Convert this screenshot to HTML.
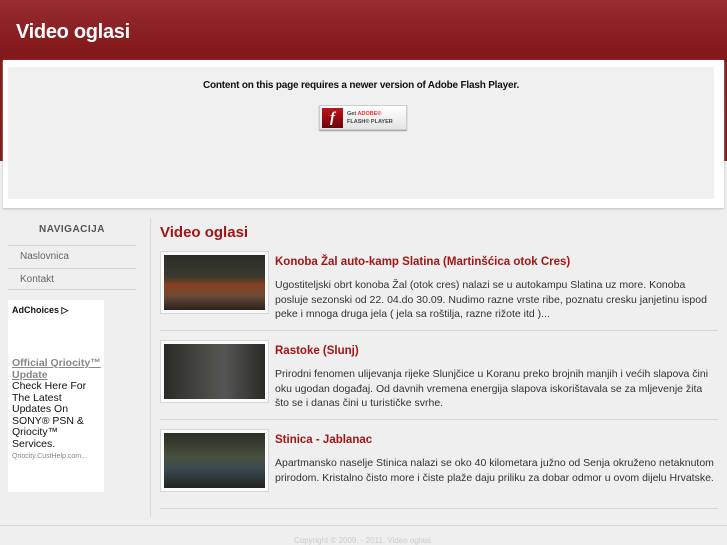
<!DOCTYPE html>
<html><head><style>
*{margin:0;padding:0;box-sizing:border-box}
body{width:727px;height:545px;overflow:hidden;background:#efefef;font-family:"Liberation Sans",sans-serif;position:relative}
.hdr{position:absolute;left:0;top:0;width:727px;height:161px;background:linear-gradient(#972d31,#84191c 30%,#7f1a1c)}
.hdr h1{position:absolute;left:16px;top:21px;color:#fff;font-size:20px;font-weight:bold;letter-spacing:-0.3px}
.box{position:absolute;left:3px;top:60px;width:721px;height:148px;background:#fff;box-shadow:0 1px 2px #bbb}
.inner{position:absolute;left:5px;top:7px;width:706px;height:132px;background:#f0f0f0;text-align:center}
.inner p{font-size:10px;font-weight:bold;margin-top:13px;color:#111;letter-spacing:-0.2px}
.btn{position:absolute;left:311px;top:38px;width:88px;height:25px;background:linear-gradient(#fff,#e4e4e4);border:1px solid #ccc;box-shadow:0 1px 1px #999}
.btn .f{position:absolute;left:2px;top:2px;width:21px;height:20px;background:linear-gradient(#c3141a,#6b0306);color:#fff;font:italic bold 15px "Liberation Serif",serif;line-height:20px;text-align:center}
.btn .t{position:absolute;left:27px;top:4px;font-size:5.5px;text-align:left;color:#444;line-height:8px;font-weight:bold}
.nav{position:absolute;left:8px;top:224px;width:128px}
.nav h3{font-size:10px;color:#555;text-align:center;letter-spacing:.5px;height:21px}
.nav div{border-top:1px solid #d4d4d4;height:22.5px;font-size:10px;color:#666;padding:5px 0 0 12px}
.nav div.l{border-bottom:1px solid #d4d4d4}
.ad{position:absolute;left:8px;top:300px;width:96px;height:192px;background:#fff;font-size:10.5px;color:#111;padding:4px 4px;white-space:nowrap}
.vl{position:absolute;left:150px;top:218px;width:1px;height:299px;background:#d8d8d8}
.ct{position:absolute;left:160px;top:224px;width:558px}
.ct h2{color:#a31515;font-size:15px;height:27px}
.it{position:relative;height:89px;border-bottom:1px solid #d8d8d8}
.th{position:absolute;left:0;top:9px;width:109px;height:63px;border:1px solid #d6d6d6;background:#fafafa;padding:3px}
.th div{width:100%;height:100%}
.it h4{position:absolute;left:115px;top:14px;color:#a31515;font-size:11.5px}
.it p{position:absolute;left:115px;top:36px;font-size:10.5px;color:#333;line-height:14.5px;width:442px}
.ft{position:absolute;left:0;top:525px;width:727px;border-top:1px solid #d8d8d8;font-size:8px;color:#ccc;text-align:center;padding-top:10px}
</style></head><body>
<div class="hdr"><h1>Video oglasi</h1></div>
<div class="box"><div class="inner"><p>Content on this page requires a newer version of Adobe Flash Player.</p>
<div class="btn"><div class="f">f</div><div class="t">Get <span style="color:#e33">ADOBE®</span><br>FLASH® PLAYER</div></div></div></div>
<div class="nav"><h3>NAVIGACIJA</h3><div>Naslovnica</div><div class="l">Kontakt</div></div>
<div class="ad"><b style="font-size:9px">AdChoices ▷</b>
<div style="margin-top:42px;line-height:11.5px"><u style="color:#888;font-weight:bold">Official Qriocity™</u><br><u style="color:#888;font-weight:bold">Update</u><br>Check Here For<br>The Latest<br>Updates On<br>SONY® PSN &amp;<br>Qriocity™<br>Services.<br><span style="font-size:7px;color:#888;line-height:9px">Qriocity.CustHelp.com...</span></div></div>
<div class="vl"></div>
<div class="ct"><h2>Video oglasi</h2>
<div class="it" style="height:80px"><div class="th" style="top:0"><div style="background:linear-gradient(#2a2c28,#3c3a30 40%,#8a4020 55%,#6a4a35 75%,#2a2020)"></div></div>
<h4 style="top:5px">Konoba Žal auto-kamp Slatina (Martinšćica otok Cres)</h4>
<p style="top:27px">Ugostiteljski obrt konoba Žal (otok cres) nalazi se u autokampu Slatina uz more. Konoba posluje sezonski od 22. 04.do 30.09. Nudimo razne vrste ribe, poznatu cresku janjetinu ispod peke i mnoga druga jela ( jela sa roštilja, razne rižote itd )...</p></div>
<div class="it"><div class="th"><div style="background:linear-gradient(90deg,#2a2a28,#4a4a44 40%,#555 60%,#2a2a26)"></div></div>
<h4>Rastoke (Slunj)</h4>
<p>Prirodni fenomen ulijevanja rijeke Slunjčice u Koranu preko brojnih manjih i većih slapova čini oku ugodan događaj. Od davnih vremena energija slapova iskorištavala se za mljevenje žita što se i danas čini u turističke svrhe.</p></div>
<div class="it"><div class="th"><div style="background:linear-gradient(#2a2e26,#4a5040 45%,#3a4a50 65%,#222)"></div></div>
<h4>Stinica - Jablanac</h4>
<p>Apartmansko naselje Stinica nalazi se oko 40 kilometara južno od Senja okruženo netaknutom prirodom. Kristalno čisto more i čiste plaže daju priliku za dobar odmor u ovom dijelu Hrvatske.</p></div>
</div>
<div class="ft">Copyright © 2009. - 2011. Video oglasi.</div>
</body></html>
